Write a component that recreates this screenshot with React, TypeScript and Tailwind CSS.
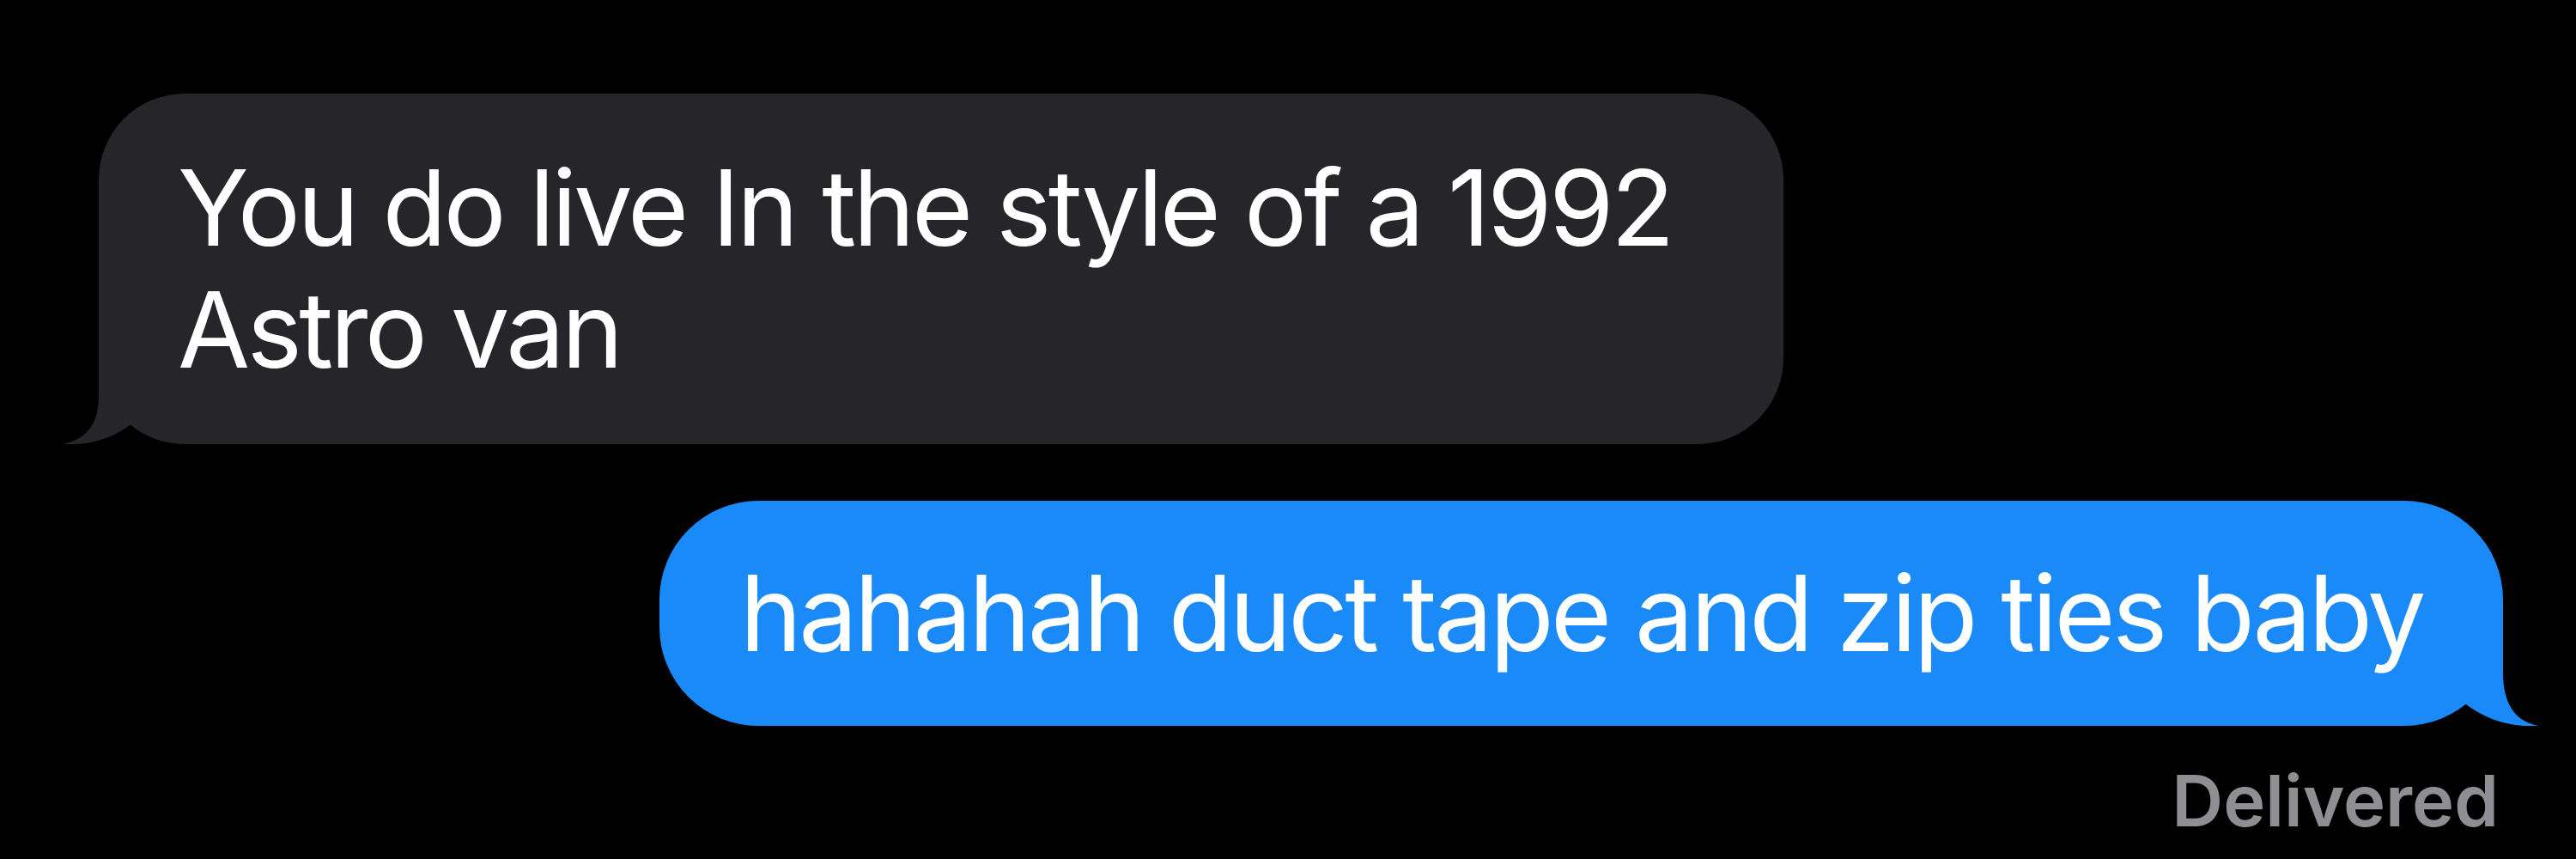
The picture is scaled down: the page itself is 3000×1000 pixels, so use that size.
const font = { fontFamily: 'Inter, "Noto Sans", sans-serif' };

function LeftTail() {
  return (
    <svg
      className="absolute left-[-42px] bottom-0"
      width="150"
      height="130"
      viewBox="-42 -130 150 130"
    >
      <path
        d="M 0 -130 L 0 -56 Q 0 -8 -42 0 Q 10 3 46 -30 L 70 -30 L 70 -130 Z"
        fill="#26252a"
      />
    </svg>
  );
}

function RightTail() {
  return (
    <svg
      className="absolute right-[-41px] bottom-0"
      width="140"
      height="130"
      viewBox="-99 -130 140 130"
    >
      <path
        d="M 0 -130 L 0 -62 Q 0 -8 41 0 Q -8 3 -47 -28 L -60 -28 L -60 -130 Z"
        fill="#1b8af9"
      />
    </svg>
  );
}

export default function App() {
  return (
    <div className="w-[3000px] h-[1000px] bg-black overflow-hidden" style={font}>
      <div className="flex flex-col pt-[109px]">
        <div className="relative ml-[115px] w-[1962px] rounded-[100px] bg-[#26252a] pl-[92px] pr-[100px] py-[62px] text-[122px] leading-[142px] tracking-[-0.03em] text-white">
          <LeftTail />
          <span className="relative">You do live In the style of a 1992 Astro van</span>
        </div>

        <div className="relative self-end mr-[85px] mt-[66px] rounded-[115px] bg-[#1b8af9] pl-[94px] pr-[93px] py-[60px] text-[122px] leading-[142px] tracking-[-0.03em] text-white whitespace-nowrap">
          <RightTail />
          <span className="relative">hahahah duct tape and zip ties baby</span>
        </div>

        <div className="self-end mr-[90px] mt-[46px] text-[83px] leading-none font-semibold text-[#8e8e93]">
          Delivered
        </div>
      </div>
    </div>
  );
}
